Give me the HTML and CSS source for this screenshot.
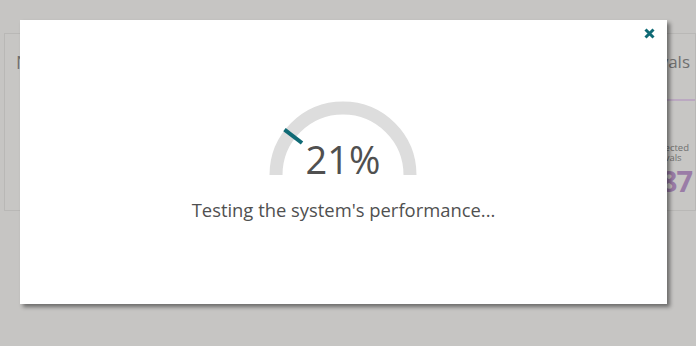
FILE: index.html
```html
<!DOCTYPE html>
<html>
<head>
<meta charset="utf-8">
<link rel="stylesheet" href="styles.css">
</head>
<body>
<div class="dashboard">
  <div class="card card-left">
    <div class="card-title">New Visitors</div>
  </div>
  <div class="card card-right">
    <div class="card-title right">Arrivals</div>
    <div class="card-rule"></div>
    <div class="stat">
      <div class="stat-label">Expected<br>Arrivals</div>
      <div class="stat-value">87</div>
    </div>
  </div>
</div>

<div class="modal">
  <button class="close" aria-label="Close">
    <svg width="11" height="11" viewBox="0 0 11 11"><path d="M1.5 1.5 L9.5 9.5 M9.5 1.5 L1.5 9.5" stroke="#0f6a75" stroke-width="3" stroke-linecap="butt"/></svg>
  </button>
  <div class="modal-body">
    <div class="gauge">
      <svg class="gauge-svg" width="150" height="76" viewBox="0 0 150 76">
        <path d="M 8 75 A 67 67 0 0 1 142 75" fill="none" stroke="#dddddd" stroke-width="13"/>
        <line x1="34" y1="43" x2="16.5" y2="29.6" stroke="#0f6a75" stroke-width="4"/>
      </svg>
      <div class="gauge-value">21%</div>
    </div>
    <div class="status">Testing the system's performance...</div>
  </div>
</div>
</body>
</html>
```

FILE: styles.css
```css
html, body {
  margin: 0;
  padding: 0;
  width: 696px;
  height: 346px;
  overflow: hidden;
  background: #c6c5c3;
  font-family: "Open Sans", "Noto Sans", sans-serif;
}

.dashboard {
  display: flex;
  padding: 33px 0 0 4px;
}

.card {
  height: 178px;
  background: #c7c6c4;
  border: 1px solid #b9b8b6;
  box-sizing: border-box;
}

.card-left {
  width: 330px;
  padding: 16px 0 0 11px;
}

.card-right {
  width: 370px;
  padding: 16px 10px 0 0;
  display: flex;
  flex-direction: column;
  align-items: flex-end;
}

.card-title {
  font-size: 18px;
  color: #6f6f6f;
  line-height: 24px;
  white-space: nowrap;
}

.card-title.right {
  font-size: 17px;
  margin-right: -5px;
}

.card-rule {
  align-self: stretch;
  height: 2px;
  background: #bba9c1;
  margin: 25px -10px 0 0;
}

.stat {
  display: flex;
  flex-direction: column;
  align-items: flex-end;
  margin-top: 42px;
  margin-right: -4px;
}

.stat-label {
  font-size: 9.5px;
  line-height: 10px;
  color: #707070;
  text-align: left;
  white-space: nowrap;
}

.stat-value {
  font-size: 29px;
  line-height: 30px;
  font-weight: 700;
  letter-spacing: -1px;
  color: #9a7ca7;
  margin-right: -3px;
  margin-top: 3px;
}

.modal {
  position: absolute;
  left: 20px;
  top: 20px;
  width: 647px;
  height: 284px;
  background: #ffffff;
  box-shadow: 3px 3px 4px rgba(0, 0, 0, 0.45);
}

.close {
  position: absolute;
  right: 12px;
  top: 8px;
  padding: 0;
  border: 0;
  background: none;
  width: 11px;
  height: 11px;
  display: block;
  cursor: pointer;
}

.close svg {
  display: block;
}

.modal-body {
  display: flex;
  flex-direction: column;
  align-items: center;
  padding-top: 80px;
}

.gauge {
  display: grid;
  width: 150px;
  height: 76px;
  margin-left: -1px;
}

.gauge-svg,
.gauge-value {
  grid-area: 1 / 1;
}

.gauge-svg {
  display: block;
}

.gauge-value {
  align-self: end;
  justify-self: center;
  font-size: 38px;
  line-height: 1;
  color: #505050;
  margin-bottom: -2px;
}

.status {
  margin-top: 21px;
  font-size: 18.4px;
  line-height: 25px;
  color: #505050;
}
```
